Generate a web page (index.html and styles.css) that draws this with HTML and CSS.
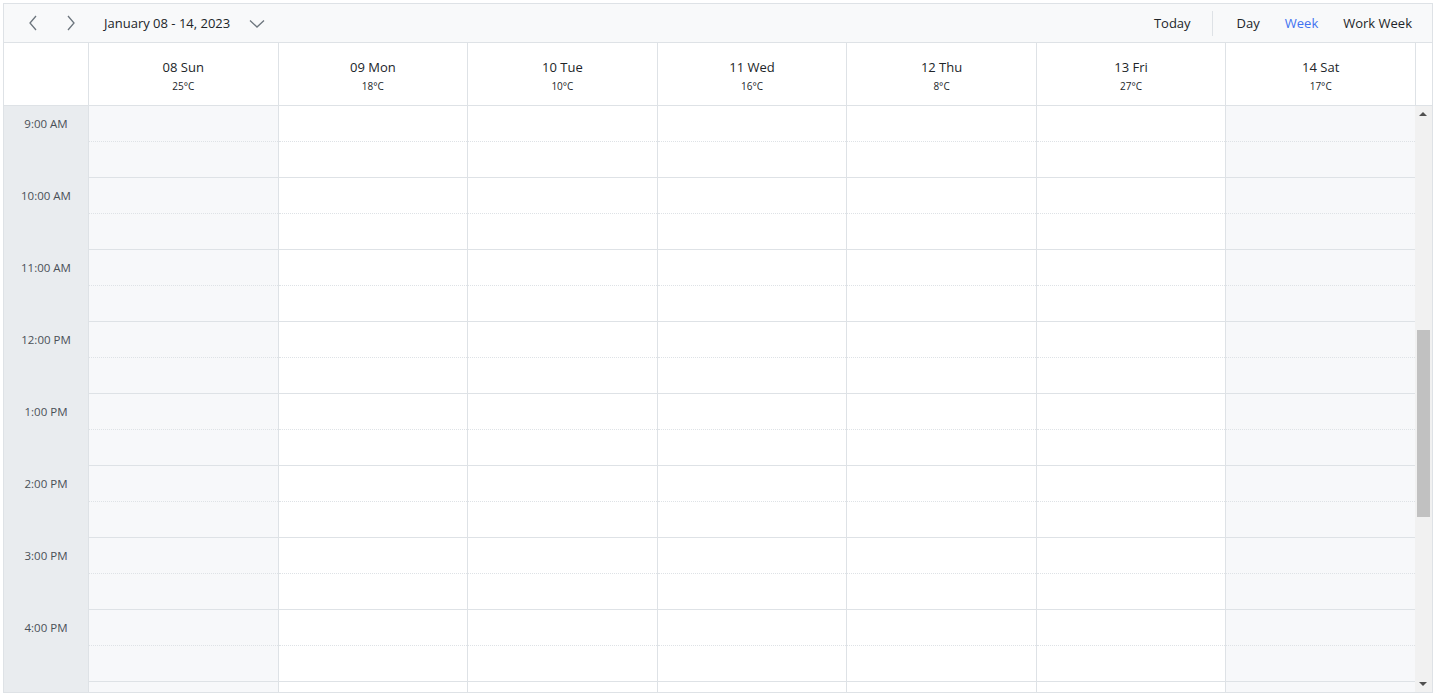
FILE: index.html
```html
<!DOCTYPE html>
<html lang="en">
<head>
    <meta charset="UTF-8">
    <meta name="viewport" content="width=device-width, initial-scale=1.0">
    <title>Schedule - Week</title>
    <link rel="stylesheet" href="styles.css">
</head>
<body>
    <div class="scheduler">
        <div class="toolbar">
            <div class="toolbar-left">
                <button class="icon-btn" title="Previous">
                    <svg width="12" height="16" viewBox="0 0 12 16"><path d="M9 1 L3 8 L9 15" fill="none" stroke="#6c757d" stroke-width="1.3"/></svg>
                </button>
                <button class="icon-btn" title="Next">
                    <svg width="12" height="16" viewBox="0 0 12 16"><path d="M3 1 L9 8 L3 15" fill="none" stroke="#6c757d" stroke-width="1.3"/></svg>
                </button>
                <span class="date-range">January 08 - 14, 2023</span>
                <svg class="caret" width="16" height="10" viewBox="0 0 16 10"><path d="M1 1.5 L8 8 L15 1.5" fill="none" stroke="#6c757d" stroke-width="1.3"/></svg>
            </div>
            <div class="toolbar-right">
                <span class="tb-item">Today</span>
                <span class="tb-sep"></span>
                <span class="tb-item">Day</span>
                <span class="tb-item active">Week</span>
                <span class="tb-item">Work Week</span>
            </div>
        </div>

        <div class="header-row">
            <div class="corner"></div>
            <div class="head-days" id="head-days"></div>
            <div class="head-gap"></div>
        </div>

        <div class="content">
            <div class="viewport">
                <div class="time-col" id="time-col"></div>
                <div class="days" id="days"></div>
            </div>
            <div class="scrollbar">
                <div class="sb-arrow up"></div>
                <div class="sb-track"><div class="sb-thumb"></div></div>
                <div class="sb-arrow down"></div>
            </div>
        </div>
    </div>

    <script>
        const days = [
            { date: "08 Sun", temp: "25°C", weekend: true },
            { date: "09 Mon", temp: "18°C" },
            { date: "10 Tue", temp: "10°C" },
            { date: "11 Wed", temp: "16°C" },
            { date: "12 Thu", temp: "8°C" },
            { date: "13 Fri", temp: "27°C" },
            { date: "14 Sat", temp: "17°C", weekend: true }
        ];
        // last row is only partly visible, its label sits below the fold
        const hours = ["9:00 AM", "10:00 AM", "11:00 AM", "12:00 PM", "1:00 PM", "2:00 PM", "3:00 PM", "4:00 PM", ""];

        const headDays = document.getElementById("head-days");
        const timeCol = document.getElementById("time-col");
        const daysEl = document.getElementById("days");

        days.forEach(function (d) {
            const cell = document.createElement("div");
            cell.className = "head-cell";
            cell.innerHTML = '<div class="head-date">' + d.date + '</div><div class="head-temp">' + d.temp + '</div>';
            headDays.appendChild(cell);

            const col = document.createElement("div");
            col.className = d.weekend ? "day-col weekend" : "day-col";
            hours.forEach(function () {
                col.innerHTML += '<div class="slot"></div><div class="slot hour-end"></div>';
            });
            daysEl.appendChild(col);
        });

        hours.forEach(function (h) {
            const cell = document.createElement("div");
            cell.className = "time-cell";
            cell.innerHTML = '<span class="time-label">' + h + '</span>';
            timeCol.appendChild(cell);
        });
    </script>
</body>
</html>
```

FILE: styles.css
```css
body {
    margin: 0;
    font-family: "Open Sans", "Noto Sans", Arial, sans-serif;
    color: #212529;
    background: white;
}

.scheduler {
    margin: 3px;
    width: 1428px;
    height: 688px;
    border: 1px solid #dee2e6;
    display: flex;
    flex-direction: column;
    overflow: hidden;
}

.toolbar {
    height: 38px;
    flex-shrink: 0;
    background: #f8f9fa;
    border-bottom: 1px solid #dee2e6;
    display: flex;
    align-items: center;
    justify-content: space-between;
}

.toolbar-left {
    display: flex;
    align-items: center;
    padding-left: 13px;
}

.icon-btn {
    background: none;
    border: none;
    padding: 0;
    width: 32px;
    height: 30px;
    margin-right: 6px;
    display: flex;
    align-items: center;
    justify-content: center;
    cursor: pointer;
}

.date-range {
    font-size: 13px;
    margin-left: 11px;
    color: #212529;
}

.caret {
    margin-left: 19px;
    margin-top: 1px;
}

.toolbar-right {
    display: flex;
    align-items: center;
    padding-right: 20px;
    font-size: 13px;
}

.tb-item {
    margin-left: 25px;
    cursor: pointer;
}

.tb-item:first-child {
    margin-left: 0;
}

.tb-item.active {
    color: #3f72f0;
}

.tb-sep {
    width: 1px;
    height: 25px;
    background: #dee2e6;
    margin-left: 21px;
    margin-right: -1px;
}

.header-row {
    height: 62px;
    flex-shrink: 0;
    display: flex;
    border-bottom: 1px solid #dee2e6;
}

.corner {
    width: 84px;
    flex-shrink: 0;
}

.head-days {
    flex: 1;
    display: grid;
    grid-template-columns: repeat(7, 1fr);
}

.head-cell {
    border-left: 1px solid #dee2e6;
    text-align: center;
    padding-top: 15px;
}

.head-date {
    font-size: 13px;
    line-height: 18px;
}

.head-temp {
    font-size: 10px;
    line-height: 14px;
    margin-top: 3px;
}

.head-gap {
    width: 16px;
    flex-shrink: 0;
    border-left: 1px solid #dee2e6;
}

.content {
    flex: 1;
    display: flex;
    overflow: hidden;
}

.viewport {
    flex: 1;
    display: flex;
    overflow: hidden;
}

.time-col {
    width: 84px;
    flex-shrink: 0;
    background: #e9ecef;
}

.time-cell {
    height: 72px;
    text-align: center;
}

.time-label {
    display: block;
    height: 36px;
    line-height: 36px;
    font-size: 11.5px;
    color: #495057;
}

.days {
    flex: 1;
    display: grid;
    grid-template-columns: repeat(7, 1fr);
    align-content: start;
}

.day-col {
    border-left: 1px solid #dee2e6;
}

.day-col.weekend {
    background: #f7f8fa;
}

.slot {
    height: 36px;
    box-sizing: border-box;
    border-bottom: 1px dotted #dee2e6;
}

.slot.hour-end {
    border-bottom: 1px solid #dee2e6;
}

.scrollbar {
    width: 17px;
    flex-shrink: 0;
    background: #f1f1f1;
    display: flex;
    flex-direction: column;
}

.sb-arrow {
    height: 17px;
    position: relative;
}

.sb-arrow:before {
    content: "";
    position: absolute;
    left: 4px;
    border-left: 4px solid transparent;
    border-right: 4px solid transparent;
}

.sb-arrow.up:before {
    top: 6px;
    border-bottom: 4px solid #505050;
}

.sb-arrow.down:before {
    top: 7px;
    border-top: 4px solid #505050;
}

.sb-track {
    flex: 1;
    padding-top: 207px;
}

.sb-thumb {
    margin: 0 2px;
    height: 187px;
    background: #c1c1c1;
}
```
